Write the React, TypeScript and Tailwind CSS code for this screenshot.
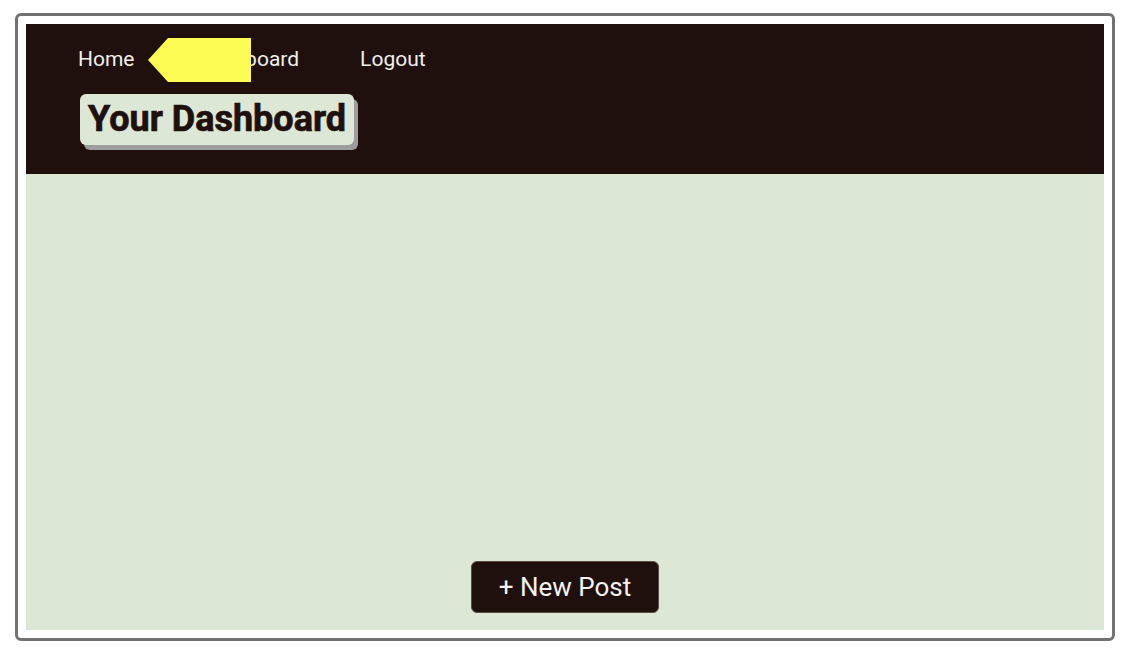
import React from "react";

const NavArrow = () => (
  <svg
    className="absolute left-[122px] top-[14px]"
    width="104"
    height="45"
    viewBox="0 0 104 45"
  >
    <polygon points="0,22 20,0 103,0 103,44 20,44" fill="#fdfc55" />
  </svg>
);

const App = () => {
  const links = ["Home", "Dashboard", "Logout"];

  return (
    <div
      className="w-[1130px] h-[656px] bg-white pt-[13px] px-[15px]"
      style={{ fontFamily: "Roboto, 'Noto Sans', sans-serif" }}
    >
      <div className="h-[628px] border-[3px] border-[#727272] rounded-md p-2 flex flex-col">
        <header className="bg-[#1f100e] h-[150px] pt-[22px] pl-[52px] relative">
          <nav className="flex items-center h-7 text-[21px] text-[#f1efe9]">
            {links.map((l, i) => (
              <a
                key={l}
                href="#"
                className={i === 0 ? "mr-[63px]" : i === 1 ? "mr-[61px]" : ""}
              >
                {l}
              </a>
            ))}
          </nav>
          <NavArrow />
          <h1 className="inline-block mt-5 ml-[2px] bg-[#dce8d5] text-[#1f100e] text-[36px] font-bold [-webkit-text-stroke:0.7px_#1f100e] leading-[51px] px-2 rounded-md shadow-[4px_5px_0_#9d9d9d]">
            Your Dashboard
          </h1>
        </header>
        <main className="flex-1 bg-[#dce8d5] flex flex-col items-center justify-end pb-[17px]">
          <button className="h-[52px] px-[27px] bg-[#1f100e] text-[#f5f3ef] text-[26px] rounded-md border border-[#5b4b48]">
            + New Post
          </button>
        </main>
      </div>
    </div>
  );
};

export default App;
